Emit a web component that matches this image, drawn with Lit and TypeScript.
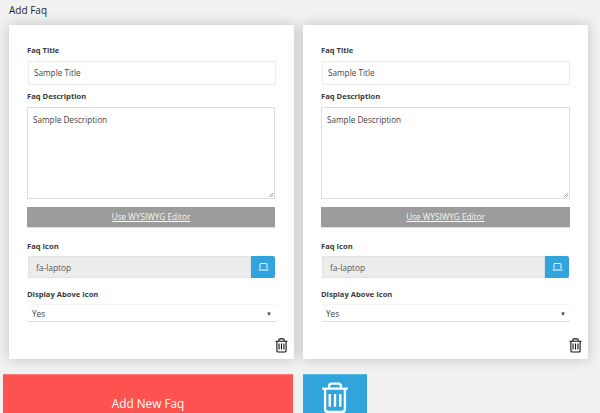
import { LitElement, html, css, svg } from "lit";
import { customElement } from "lit/decorators.js";

const trash = (w: number, h: number, sw: number, cls: string) => html`<svg class=${cls} width=${w} height=${h} viewBox="0 0 24 27" fill="none" stroke="currentColor" stroke-width=${sw}>
  ${svg`<path d="M1 5.5H23M7 5V3.2C7 2 8 1.2 9 1.2H15C16 1.2 17 2 17 3.2V5M3.5 5.5V23C3.5 24.5 4.5 25.5 6 25.5H18C19.5 25.5 20.5 24.5 20.5 23V5.5M7.5 10V21M12 10V21M16.5 10V21"/>`}
</svg>`;

@customElement("app-root")
export class AppRoot extends LitElement {
  static styles = css`
    :host { display: block; width: 600px; height: 413px; overflow: hidden; background: #f1f1f1; font-family: "Open Sans", sans-serif; color: #333; }
    .title { font-size: 10px; line-height: 13px; padding: 4px 0 0 9px; color: #23282d; height: 25px; box-sizing: border-box; }
    .cards { display: flex; gap: 9px; padding-left: 9px; }
    .card { width: 285px; height: 334px; box-sizing: border-box; background: #fff; box-shadow: 0 0 12px rgba(0,0,0,.2); padding: 19px 18px 0; display: flex; flex-direction: column; position: relative; }
    label { display: block; font-size: 7.6px; font-weight: 700; line-height: 13px; color: #3a3a3a; margin-bottom: 3px; }
    .input { height: 24px; box-sizing: border-box; margin: 1px 0 5px 1px; width: 248px; border: 1px solid #ececec; background: #fff; font-size: 8.2px; line-height: 22px; padding-left: 5px; color: #444; }
    .area { height: 92px; width: 248px; box-sizing: border-box; border: 1px solid #ddd; margin: 1px 0 8px; padding: 6px 5px; font-size: 8.2px; line-height: 12px; color: #444; position: relative; }
    .grip { position: absolute; right: 1px; bottom: 1px; width: 5px; height: 5px; background: linear-gradient(135deg, transparent 50%, #aaa 50%, #aaa 60%, transparent 60%, transparent 75%, #aaa 75%, #aaa 85%, transparent 85%); }
    .wys { height: 21px; width: 248px; box-sizing: border-box; background: #9c9c9c; border-bottom: 1px solid #ddd; color: #f5f5f5; font-size: 8.2px; line-height: 20px; text-align: center; text-decoration: underline; margin-bottom: 12px; }
    .card + .card .area, .card + .card .wys { width: 249px; }
    .icon-row { display: flex; width: 248px; height: 22px; margin-bottom: 10px; }
    .icon-input { flex: 1; margin-left: 1px; box-sizing: border-box; background: #ececec; border: 1px solid #e2e2e2; font-size: 8.4px; line-height: 22px; padding-left: 7px; color: #555; }
    .icon-btn { width: 24px; background: #31a3dd; border-radius: 0 2px 2px 0; display: flex; align-items: center; justify-content: center; }
    .sel { height: 18px; width: 248px; margin-left: 1px; box-sizing: border-box; border-top: 1px solid #f4f4f4; border-bottom: 1px solid #ddd; background: #fff; font-size: 8.2px; line-height: 16px; padding: 1px 4px 0; color: #444; display: flex; justify-content: space-between; align-items: center; }
    .caret { font-size: 6px; color: #444; }
    .del { position: absolute; right: 6px; bottom: 6px; color: #111; display: block; }
    .actions { display: flex; gap: 10px; padding: 15px 0 0 3px; }
    .btn-add { width: 290px; height: 50px; box-sizing: border-box; background: #fd5350; border-top: 1px solid #fb7d7a; color: #fff; font-size: 11.8px; text-align: center; padding-top: 20px; line-height: 16px; }
    .btn-del { width: 64px; height: 50px; box-sizing: border-box; background: #31a3dd; border-top: 1px solid #5cb8e6; color: #fff; display: flex; justify-content: center; padding-top: 7px; }
  `;

  private card() {
    return html`<div class="card">
      <label>Faq Title</label>
      <div class="input">Sample Title</div>
      <label>Faq Description</label>
      <div class="area">Sample Description<span class="grip"></span></div>
      <div class="wys">Use WYSIWYG Editor</div>
      <label>Faq Icon</label>
      <div class="icon-row">
        <div class="icon-input">fa-laptop</div>
        <div class="icon-btn">
          <svg width="11" height="8" viewBox="0 0 11 8" fill="none" stroke="#fff" stroke-width="1"><path d="M2 5.5V1.2C2 .8 2.2.5 2.7.5H8.3C8.8.5 9 .8 9 1.2V5.5M.5 7H10.5"/></svg>
        </div>
      </div>
      <label>Display Above Icon</label>
      <div class="sel"><span>Yes</span><span class="caret">▼</span></div>
      ${trash(13, 15, 2, "del")}
    </div>`;
  }

  render() {
    return html`
      <div class="title">Add Faq</div>
      <div class="cards">${this.card()}${this.card()}</div>
      <div class="actions">
        <div class="btn-add">Add New Faq</div>
        <div class="btn-del">${trash(28, 32, 2, "")}</div>
      </div>`;
  }
}
